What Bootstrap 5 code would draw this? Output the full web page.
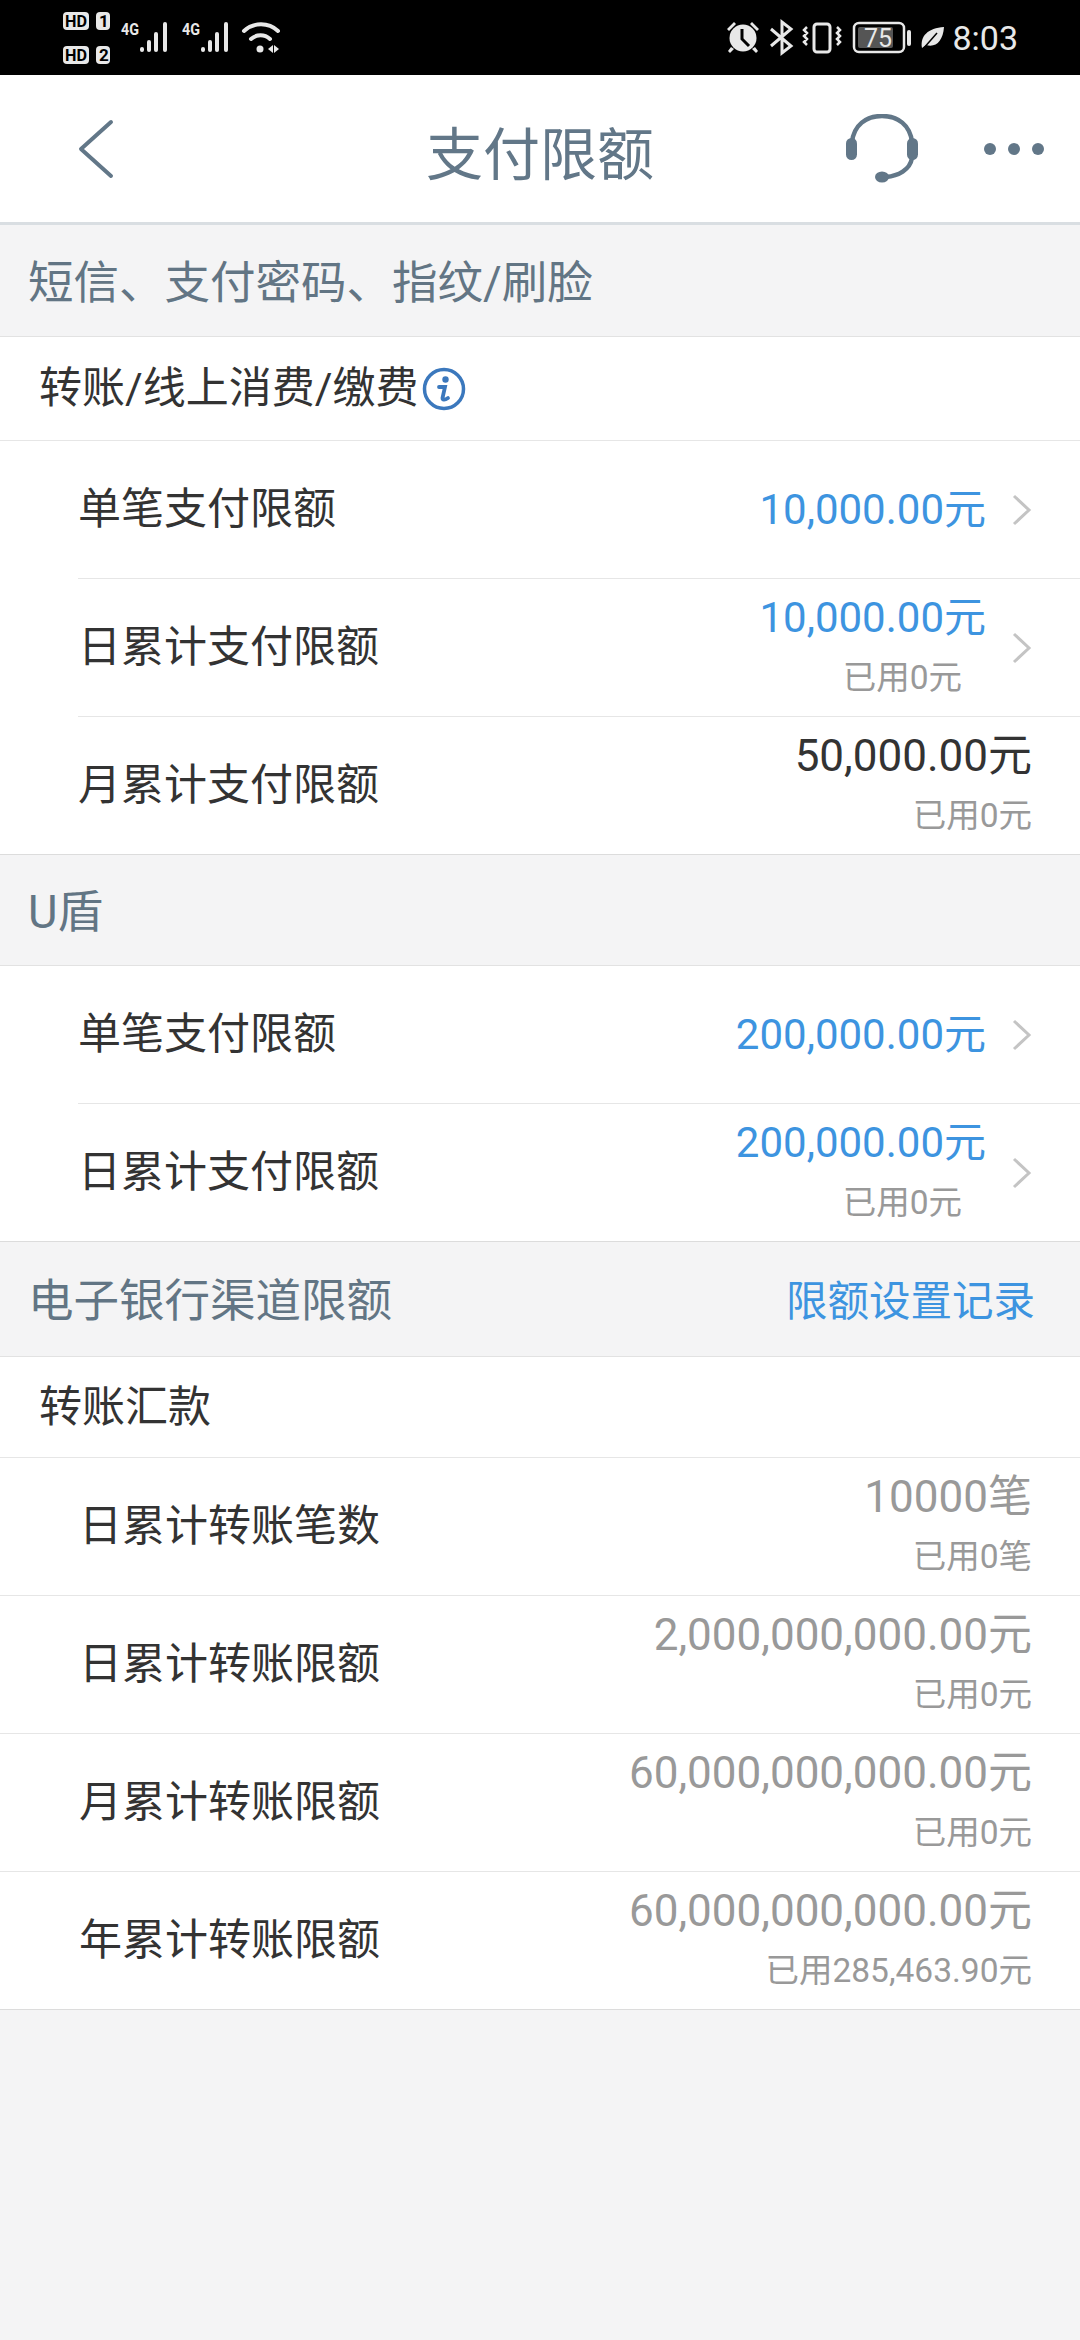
<!DOCTYPE html>
<html lang="zh">

<head>
    <meta charset="UTF-8">
    <meta name="viewport" content="width=device-width, initial-scale=1.0">
    <title>支付限额</title>
    <link href="https://cdn.jsdelivr.net/npm/bootstrap@5.3.0/dist/css/bootstrap.min.css" rel="stylesheet">
    <style>
        body {
            background: #f4f4f5;
            font-family: Roboto, "Noto Sans CJK SC", sans-serif;
            color: #333;
        }

        .status-bar {
            height: 75px;
            background: #000;
            color: #e8e8e8;
            padding: 0 62px;
        }

        .status-time {
            font-size: 34px;
            line-height: 1;
            margin-left: 5px;
        }

        .top-bar {
            height: 150px;
            background: #fff;
            border-bottom: 3px solid #d9dee2;
            padding: 0 36px 0 76px;
            color: #627788;
        }

        .top-back {
            width: 350px;
        }

        .top-actions {
            flex: 1 1 0;
        }

        .top-title {
            font-size: 57px;
            line-height: 1;
            padding-top: 14px;
        }

        .headset {
            margin-right: 18px;
        }

        .sect-head {
            background: #f4f4f5;
            color: #627584;
            font-size: 45.5px;
            line-height: 1;
            padding: 6px 28px 0;
            border-bottom: 1px solid #e2e2e2;
        }

        .sect-first {
            height: 112px;
        }

        .sect-shield {
            height: 111px;
        }

        .sect-bank {
            height: 115px;
        }

        .sect-link {
            color: #3d94e0;
            font-size: 41.5px;
            padding-right: 17px;
        }

        .group-head {
            background: #fff;
            font-size: 43px;
            line-height: 1;
            padding-left: 39px;
            border-bottom: 1px solid #e6e6e6;
        }

        .group-pay {
            height: 104px;
        }

        .group-bank {
            height: 101px;
        }

        .limit-list {
            background: #fff;
            border-bottom: 1px solid #dcdcdc;
        }

        .limit-row {
            height: 138px;
            margin-left: 78px;
            padding-right: 48px;
            border-bottom: 1px solid #e6e6e6;
        }

        .limit-row:last-child {
            height: 137px;
            border-bottom: 0;
        }

        .limit-row.wide {
            margin-left: 0;
            padding-left: 79px;
        }

        .limit-name {
            font-size: 43px;
            line-height: 1;
        }

        .limit-val {
            font-size: 44px;
            line-height: 50px;
        }

        .limit-used {
            font-size: 33.5px;
            line-height: 50px;
            color: #999;
            margin-top: 10px;
        }

        .val-blue {
            color: #3d94e0;
            font-size: 42px;
        }

        .val-grey {
            color: #999;
        }

        .val-dark {
            color: #333;
        }

        .chev {
            width: 20px;
            height: 32px;
            margin-left: 26px;
        }
    </style>
</head>

<body>
    <!-- barra de estado -->
    <div class="status-bar d-flex align-items-center justify-content-between">
        <svg width="230" height="75" viewBox="0 0 230 75">
            <g fill="#e8e8e8">
                <rect x="1" y="12" width="26" height="18" rx="4"/>
                <rect x="34" y="12" width="14" height="18" rx="4"/>
                <rect x="1" y="46" width="26" height="18" rx="4"/>
                <rect x="34" y="46" width="14" height="18" rx="4"/>
            </g>
            <g fill="#000" font-family="Roboto, sans-serif" font-weight="700" font-size="17">
                <text x="3" y="27" textLength="22" lengthAdjust="spacingAndGlyphs">HD</text>
                <text x="37" y="27">1</text>
                <text x="3" y="61" textLength="22" lengthAdjust="spacingAndGlyphs">HD</text>
                <text x="37" y="61">2</text>
            </g>
            <g fill="#e8e8e8" font-family="Roboto, sans-serif" font-weight="700" font-size="17">
                <text x="59" y="35" textLength="18" lengthAdjust="spacingAndGlyphs">4G</text>
                <text x="120" y="35" textLength="18" lengthAdjust="spacingAndGlyphs">4G</text>
            </g>
            <g fill="#e8e8e8">
                <rect x="78" y="47" width="4" height="5" rx="2"/>
                <rect x="85" y="40" width="4" height="12" rx="2"/>
                <rect x="92" y="32" width="4" height="20" rx="2"/>
                <rect x="101" y="22" width="4" height="30" rx="2"/>
                <rect x="139" y="47" width="4" height="5" rx="2"/>
                <rect x="146" y="40" width="4" height="12" rx="2"/>
                <rect x="153" y="32" width="4" height="20" rx="2"/>
                <rect x="162" y="22" width="4" height="30" rx="2"/>
                <circle cx="198" cy="49" r="3.500"/>
                <path d="M206 49l5-4v8zM212 45l5 4-5 4z"/>
            </g>
            <g fill="none" stroke="#e8e8e8" stroke-width="4" stroke-linecap="round">
                <path d="M182 31a25 25 0 0 1 34 0"/>
                <path d="M189 39a14 14 0 0 1 19 0"/>
            </g>
        </svg>
        <div class="d-flex align-items-center">
            <svg width="226" height="75" viewBox="0 0 226 75">
                <g fill="#e8e8e8">
                    <circle cx="22" cy="38" r="13.500"/>
                    <path d="M6 29l7-7 2 2-7 7zM38 29l-7-7-2 2 7 7zM10 47l3 2-4 4-2-2zM34 47l-3 2 4 4 2-2z"/>
                </g>
                <path d="M21 29v10l7 7" fill="none" stroke="#000" stroke-width="3"/>
                <path d="M50 29l20 17-9 7V22l9 7-20 17" fill="none" stroke="#e8e8e8" stroke-width="3"/>
                <rect x="93" y="24" width="16" height="28" rx="3" fill="none" stroke="#e8e8e8" stroke-width="3"/>
                <path d="M86 27l-3 3 3 3-3 3 3 3-3 3 3 3M116 27l3 3-3 3 3 3-3 3 3 3-3 3" fill="none" stroke="#e8e8e8" stroke-width="2.500"/>
                <rect x="133" y="23" width="50" height="29" rx="5" fill="none" stroke="#e8e8e8" stroke-width="2.500"/>
                <rect x="137" y="27" width="35" height="21" rx="2" fill="#555"/>
                <text x="157" y="47" text-anchor="middle" fill="#e8e8e8" font-family="Roboto, sans-serif" font-size="25">75</text>
                <rect x="186" y="30" width="4" height="16" rx="2" fill="#e8e8e8"/>
                <path d="M201 48c-2-12 6-20 22-21-1 14-8 21-18 18z" fill="#e8e8e8"/>
                <path d="M202 49l14-16" fill="none" stroke="#000" stroke-width="1.500"/>
            </svg>
            <span class="status-time">8:03</span>
        </div>
    </div>

    <!-- cabecera -->
    <div class="top-bar d-flex align-items-center">
        <div class="top-back d-flex align-items-center">
            <svg width="40" height="60" viewBox="0 0 40 60">
                <path d="M35 3L5 30l30 27" fill="none" stroke="#627788" stroke-width="4" stroke-linecap="round" stroke-linejoin="round"/>
            </svg>
        </div>
        <div class="top-title">支付限额</div>
        <div class="top-actions d-flex align-items-center justify-content-end gap-5">
            <svg class="headset" width="72" height="69" viewBox="0 0 72 69">
                <path d="M6 28C8 11 20 2 36 2s28 9 30 26M66 44c-2 12-14 18-26 19" fill="none" stroke="#627788" stroke-width="4.500"/>
                <rect x="0" y="24" width="11" height="22" rx="5.500" fill="#627788"/>
                <rect x="61" y="24" width="11" height="22" rx="5.500" fill="#627788"/>
                <ellipse cx="36" cy="63" rx="7" ry="5.500" fill="#627788"/>
            </svg>
            <svg width="60" height="14" viewBox="0 0 60 14" fill="#627788">
                <circle cx="6" cy="7" r="6"/>
                <circle cx="30" cy="7" r="6"/>
                <circle cx="54" cy="7" r="6"/>
            </svg>
        </div>
    </div>

    <div class="sect-head sect-first d-flex align-items-center">短信、支付密码、指纹/刷脸</div>
    <div class="group-head group-pay d-flex align-items-center gap-1">
        转账/线上消费/缴费
        <svg width="44" height="44" viewBox="0 0 44 44">
            <circle cx="22" cy="22" r="19.500" fill="none" stroke="#3b78bd" stroke-width="3.500"/>
            <circle cx="23.500" cy="12.500" r="3.200" fill="#3b78bd"/>
            <path d="M17 20h6l-2.500 11c0 2 2 2.500 5.500 0" fill="none" stroke="#3b78bd" stroke-width="3.800" stroke-linecap="round"/>
        </svg>
    </div>
    <div class="limit-list">
        <div class="limit-row d-flex align-items-center justify-content-between">
            <div class="limit-name">单笔支付限额</div>
            <div class="d-flex align-items-center">
                <div class="limit-val val-blue">10,000.00元</div>
                <svg class="chev" viewBox="0 0 20 32"><path d="M2 2l15 14L2 30" fill="none" stroke="#c4c4c4" stroke-width="3"/></svg>
            </div>
        </div>
        <div class="limit-row d-flex align-items-center justify-content-between">
            <div class="limit-name">日累计支付限额</div>
            <div class="d-flex align-items-center">
                <div class="text-end">
                    <div class="limit-val val-blue">10,000.00元</div>
                    <div class="limit-used pe-4">已用0元</div>
                </div>
                <svg class="chev" viewBox="0 0 20 32"><path d="M2 2l15 14L2 30" fill="none" stroke="#c4c4c4" stroke-width="3"/></svg>
            </div>
        </div>
        <div class="limit-row d-flex align-items-center justify-content-between">
            <div class="limit-name">月累计支付限额</div>
            <div class="text-end">
                <div class="limit-val val-dark">50,000.00元</div>
                <div class="limit-used">已用0元</div>
            </div>
        </div>
    </div>

    <div class="sect-head sect-shield d-flex align-items-center">U盾</div>
    <div class="limit-list">
        <div class="limit-row d-flex align-items-center justify-content-between">
            <div class="limit-name">单笔支付限额</div>
            <div class="d-flex align-items-center">
                <div class="limit-val val-blue">200,000.00元</div>
                <svg class="chev" viewBox="0 0 20 32"><path d="M2 2l15 14L2 30" fill="none" stroke="#c4c4c4" stroke-width="3"/></svg>
            </div>
        </div>
        <div class="limit-row d-flex align-items-center justify-content-between">
            <div class="limit-name">日累计支付限额</div>
            <div class="d-flex align-items-center">
                <div class="text-end">
                    <div class="limit-val val-blue">200,000.00元</div>
                    <div class="limit-used pe-4">已用0元</div>
                </div>
                <svg class="chev" viewBox="0 0 20 32"><path d="M2 2l15 14L2 30" fill="none" stroke="#c4c4c4" stroke-width="3"/></svg>
            </div>
        </div>
    </div>

    <div class="sect-head sect-bank d-flex align-items-center justify-content-between">
        <span>电子银行渠道限额</span>
        <span class="sect-link">限额设置记录</span>
    </div>
    <div class="group-head group-bank d-flex align-items-center">转账汇款</div>
    <div class="limit-list">
        <div class="limit-row wide d-flex align-items-center justify-content-between">
            <div class="limit-name">日累计转账笔数</div>
            <div class="text-end">
                <div class="limit-val val-grey">10000笔</div>
                <div class="limit-used">已用0笔</div>
            </div>
        </div>
        <div class="limit-row wide d-flex align-items-center justify-content-between">
            <div class="limit-name">日累计转账限额</div>
            <div class="text-end">
                <div class="limit-val val-grey">2,000,000,000.00元</div>
                <div class="limit-used">已用0元</div>
            </div>
        </div>
        <div class="limit-row wide d-flex align-items-center justify-content-between">
            <div class="limit-name">月累计转账限额</div>
            <div class="text-end">
                <div class="limit-val val-grey">60,000,000,000.00元</div>
                <div class="limit-used">已用0元</div>
            </div>
        </div>
        <div class="limit-row wide d-flex align-items-center justify-content-between">
            <div class="limit-name">年累计转账限额</div>
            <div class="text-end">
                <div class="limit-val val-grey">60,000,000,000.00元</div>
                <div class="limit-used">已用285,463.90元</div>
            </div>
        </div>
    </div>

    <script src="https://cdn.jsdelivr.net/npm/bootstrap@5.3.0/dist/js/bootstrap.bundle.min.js"></script>
</body>

</html>
